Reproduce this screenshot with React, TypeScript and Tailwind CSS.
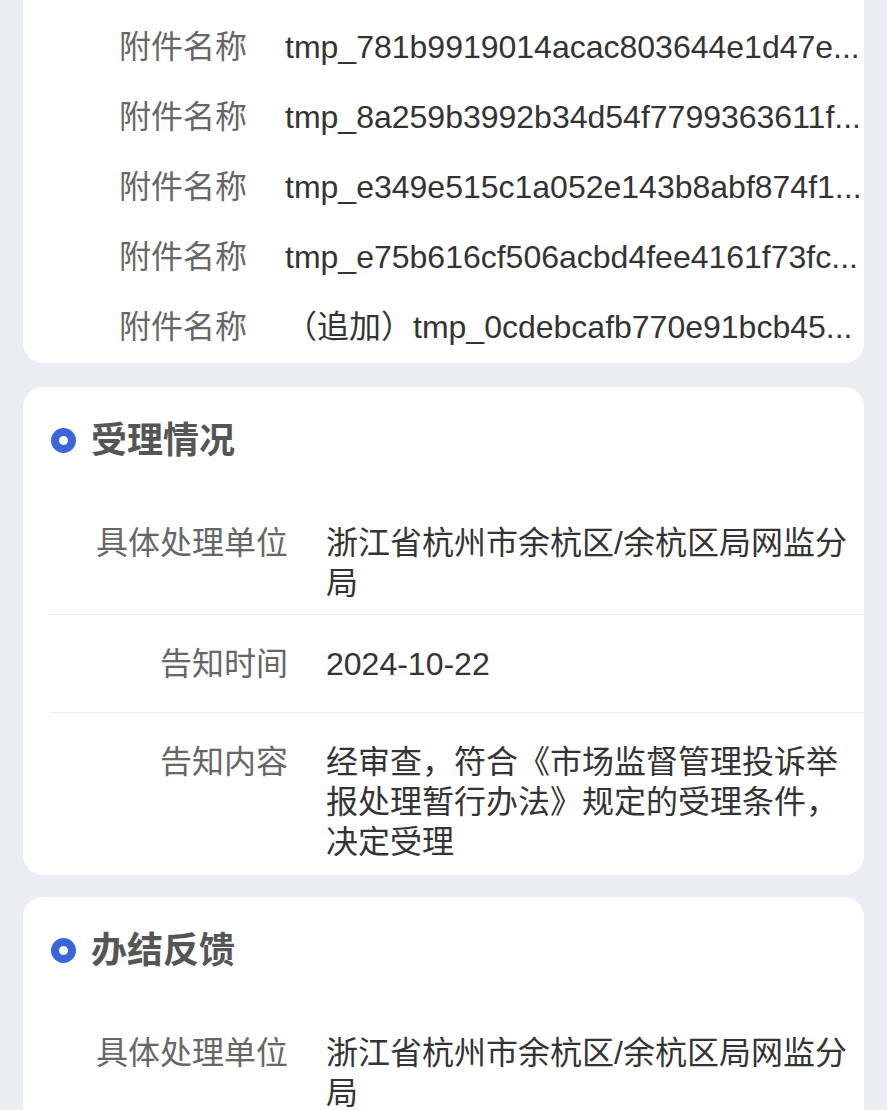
import React from "react";

const FONT = { fontFamily: '"Liberation Sans", "Noto Sans CJK SC", sans-serif' };

const attachments = [
  "tmp_781b9919014acac803644e1d47e...",
  "tmp_8a259b3992b34d54f7799363611f...",
  "tmp_e349e515c1a052e143b8abf874f1...",
  "tmp_e75b616cf506acbd4fee4161f73fc...",
  "（追加）tmp_0cdebcafb770e91bcb45...",
];

function SectionTitle({ title }: { title: string }) {
  return (
    <div className="h-[107px] flex items-center pl-[28px]">
      <div className="w-[25px] h-[25px] rounded-full border-[8px] border-[#3a66d9] shrink-0" />
      <div className="ml-[15px] text-[36px] leading-[40px] font-bold text-[#555555]">{title}</div>
    </div>
  );
}

function InfoRow({ label, value, divider }: { label: string; value: string; divider?: boolean }) {
  return (
    <div
      className={
        "ml-[27px] flex pt-[29px] pb-[11px] min-h-[98px] " +
        (divider ? "border-b border-[#efefef]" : "")
      }
    >
      <div className="w-[238px] shrink-0 text-right text-[32px] leading-[40px] text-[#666666]">{label}</div>
      <div className="ml-[38px] flex-1 min-w-0 pr-[14px] text-[32px] leading-[40px] text-[#333333]">{value}</div>
    </div>
  );
}

export default function App() {
  return (
    <div className="h-[1110px] overflow-hidden bg-[#eaedf1]" style={FONT}>
      <div className="mx-[23px] bg-white rounded-b-[20px] pt-[12px] pb-[1px]">
        {attachments.map((a, i) => (
          <div key={i} className="flex h-[70px] items-center">
            <div className="w-[224px] shrink-0 text-right text-[32px] leading-[40px] text-[#666666]">附件名称</div>
            <div className="ml-[38px] flex-1 min-w-0 whitespace-nowrap text-[32px] leading-[40px] text-[#333333]">{a}</div>
          </div>
        ))}
      </div>

      <div className="mx-[23px] mt-[24px] bg-white rounded-[20px] pb-[2px]">
        <SectionTitle title="受理情况" />
        <InfoRow label="具体处理单位" value="浙江省杭州市余杭区/余杭区局网监分局" divider />
        <InfoRow label="告知时间" value="2024-10-22" divider />
        <InfoRow label="告知内容" value="经审查，符合《市场监督管理投诉举报处理暂行办法》规定的受理条件，决定受理" />
      </div>

      <div className="mx-[23px] mt-[22px] bg-white rounded-[20px] pb-[40px]">
        <SectionTitle title="办结反馈" />
        <InfoRow label="具体处理单位" value="浙江省杭州市余杭区/余杭区局网监分局" />
      </div>
    </div>
  );
}
